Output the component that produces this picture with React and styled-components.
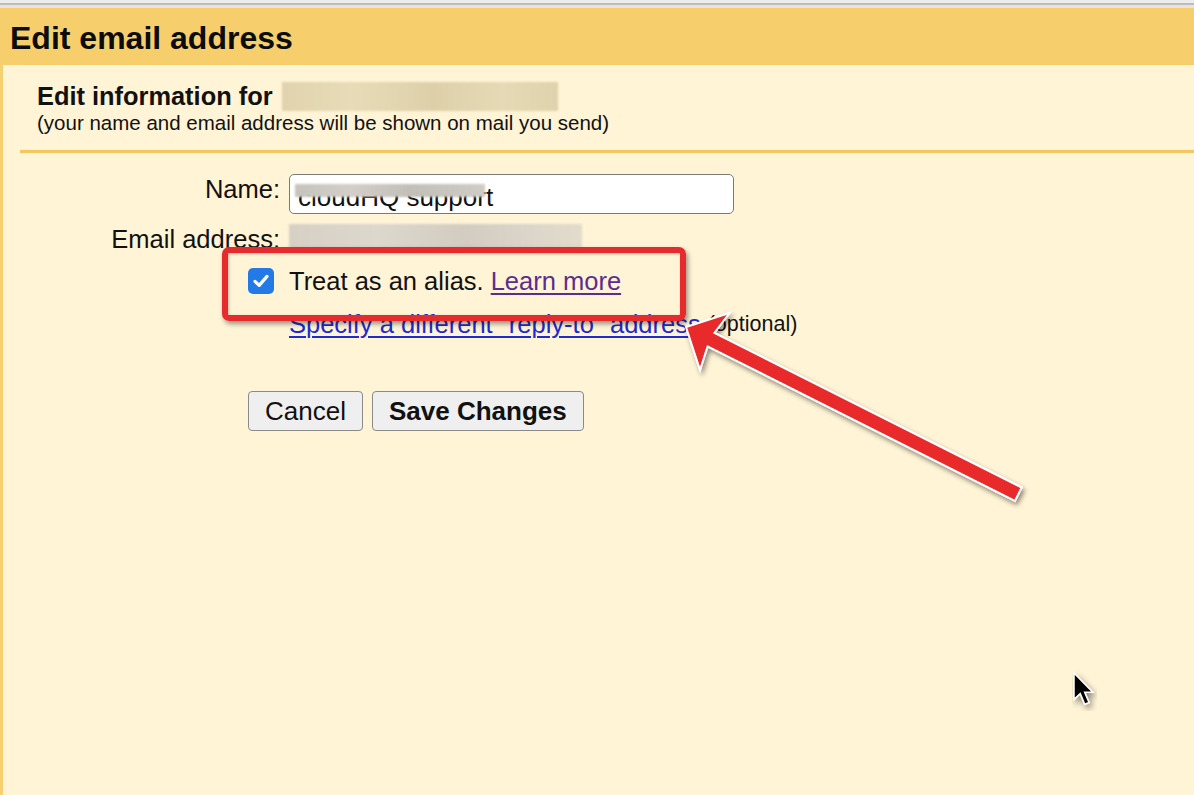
import React from 'react'
import styled, { createGlobalStyle } from 'styled-components'

const GlobalStyle = createGlobalStyle`
  html, body {
    margin: 0;
    padding: 0;
    background: #fff4d6;
  }
  body {
    font-family: "Liberation Sans", Arial, sans-serif;
    color: #111;
  }
`

const Page = styled.div`
  position: relative;
  width: 1194px;
  height: 795px;
  overflow: hidden;
  background: #fff4d6;
`
const TopStrip = styled.div`
  height: 8px;
  background: linear-gradient(#ededed 0 3px, #bdbdbd 3px 5px, #e4e4e4 5px 8px);
`
const Header = styled.div`
  height: 57px;
  display: flex;
  align-items: center;
  padding-left: 10px;
  background: #f6cf6c;
`
const Title = styled.h1`
  margin: 0;
  padding-top: 4px;
  font-size: 32px;
  font-weight: bold;
  color: #0c0c0c;
`
const Body = styled.div`
  border-left: 3px solid #f6d070;
  min-height: 730px;
`
const InfoSection = styled.div`
  padding: 16px 0 0 34px;
`
const InfoTitle = styled.div`
  display: flex;
  align-items: center;
  font-size: 25.4px;
  line-height: 30px;
  font-weight: bold;
`
const InfoNote = styled.div`
  font-size: 20.5px;
  line-height: 24px;
`
const Divider = styled.div`
  margin: 15px 0 0 17px;
  border-top: 3px solid #f4c85f;
`
const Redact = styled.span`
  display: inline-block;
  width: ${p => p.$w}px;
  height: ${p => p.$h}px;
  margin-left: ${p => p.$ml || 0}px;
  background: ${p => p.$bg};
  filter: blur(1.2px);
`
const Row = styled.div`
  display: grid;
  grid-template-columns: 277px 1fr;
  column-gap: 9px;
  align-items: start;
  margin-top: ${p => p.$top}px;
`
const Label = styled.div`
  text-align: right;
  font-size: 25.5px;
  line-height: 30px;
`
const Cell = styled.div`
  display: flex;
  align-items: ${p => p.$align || 'center'};
  font-size: 25.5px;
  line-height: 30px;
  min-height: 30px;
  white-space: nowrap;
`
const InputWrap = styled.div`
  position: relative;
  width: 445px;
  height: 40px;
`
const TextInput = styled.input`
  box-sizing: border-box;
  width: 100%;
  height: 100%;
  padding: 6px 0 0 8px;
  font-family: "Liberation Sans", Arial, sans-serif;
  font-size: 26px;
  color: #111;
  background: #fff;
  border: 1.5px solid #7a7a7a;
  border-radius: 5px;
  outline: none;
`
const InputBlur = styled.span`
  position: absolute;
  left: 6px;
  top: 10px;
  width: 190px;
  height: 13px;
  background: linear-gradient(90deg, #c6c3bd, #d3cfc8 30%, #c2beb8 60%, #cfcbc5);
  filter: blur(1.3px);
`
const CheckCell = styled.div`
  display: flex;
  justify-content: flex-end;
  padding: 2px 6px 0 0;
`
const CheckBox = styled.div`
  width: 26px;
  height: 26px;
  border-radius: 5px;
  background: #237ae6;
  display: flex;
  align-items: center;
  justify-content: center;
`
const Link = styled.a`
  color: ${p => p.$visited ? '#5b2d90' : '#1f2bcc'};
  text-decoration: underline;
  text-decoration-thickness: 2px;
  text-underline-offset: 3px;
  margin-left: ${p => p.$ml || 0}px;
  cursor: pointer;
`
const Optional = styled.span`
  font-size: 21.5px;
  margin-left: 7px;
`
const Buttons = styled.div`
  display: flex;
  gap: 9px;
  margin: 52px 0 0 245px;
`
const Button = styled.button`
  height: 40px;
  padding: 0 16px;
  font-family: "Liberation Sans", Arial, sans-serif;
  font-size: 26px;
  font-weight: ${p => p.$primary ? 'bold' : 'normal'};
  color: #111;
  background: #efefef;
  border: 1.5px solid #8a8a8a;
  border-radius: 4px;
`
const Callout = styled.div`
  position: absolute;
  left: 222px;
  top: 247px;
  width: 464px;
  height: 74px;
  box-sizing: border-box;
  border: 6px solid #e52b2c;
  border-radius: 7px;
  box-shadow: 2px 3px 5px rgba(0, 0, 0, 0.4), inset 1px 1px 3px rgba(0, 0, 0, 0.25);
  pointer-events: none;
`
const Overlay = styled.svg`
  position: absolute;
  left: 0;
  top: 0;
  pointer-events: none;
`

function Arrow() {
  return (
    <Overlay width="1194" height="795" viewBox="0 0 1194 795">
      <defs>
        <filter id="arrowShadow" x="-10%" y="-10%" width="130%" height="130%">
          <feDropShadow dx="2" dy="3" stdDeviation="2.5" floodColor="#000" floodOpacity="0.45" />
        </filter>
      </defs>
      <polygon
        points="686,327 729.5,313 714.4,332.9 1021.7,487.5 1014.9,500.9 707.6,346.3 700,370"
        fill="#e8292b"
        stroke="#fff"
        strokeWidth="2"
        strokeLinejoin="miter"
        filter="url(#arrowShadow)"
      />
      <g transform="translate(1074 673) scale(1.25)" filter="url(#arrowShadow)">
        <path d="M0 0 L0 21 L5 16.5 L8.6 25 L12 23.6 L8.5 15.3 L15 15.3 Z" fill="#000" stroke="#fff" strokeWidth="1.2" />
      </g>
    </Overlay>
  )
}

export default function App() {
  return (
    <Page>
      <GlobalStyle />
      <TopStrip />
      <Header>
        <Title>Edit email address</Title>
      </Header>
      <Body>
        <InfoSection>
          <InfoTitle>
            Edit information for
            <Redact $w={276} $h={29} $ml={9} $bg="linear-gradient(90deg, #e0d3ad, #e8dcb8 25%, #ddd0a9 55%, #e6dab6 80%, #dfd2ac)" />
          </InfoTitle>
          <InfoNote>(your name and email address will be shown on mail you send)</InfoNote>
        </InfoSection>
        <Divider />

        <Row $top={21}>
          <Label>Name:</Label>
          <InputWrap>
            <TextInput defaultValue="cloudHQ support" />
            <InputBlur />
          </InputWrap>
        </Row>

        <Row $top={10}>
          <Label>Email address:</Label>
          <Cell $align="flex-start">
            <Redact $w={293} $h={26} $bg="linear-gradient(90deg, #d6d1c4, #ddd8cc 30%, #d2cdc0 60%, #dcd7ca 85%, #e3dccb)" />
          </Cell>
        </Row>

        <Row $top={12}>
          <CheckCell>
            <CheckBox>
              <svg width="18" height="18" viewBox="0 0 18 18">
                <path d="M3 9.4 L7.2 13.4 L15 4.4" fill="none" stroke="#fff" strokeWidth="3.2" strokeLinecap="round" strokeLinejoin="round" />
              </svg>
            </CheckBox>
          </CheckCell>
          <Cell>
            Treat as an alias.
            <Link $visited $ml={7}>Learn more</Link>
          </Cell>
        </Row>

        <Row $top={13}>
          <div />
          <Cell>
            <Link>Specify a different "reply-to" address</Link>
            <Optional>(optional)</Optional>
          </Cell>
        </Row>

        <Buttons>
          <Button>Cancel</Button>
          <Button $primary>Save Changes</Button>
        </Buttons>
      </Body>
      <Callout />
      <Arrow />
    </Page>
  )
}
